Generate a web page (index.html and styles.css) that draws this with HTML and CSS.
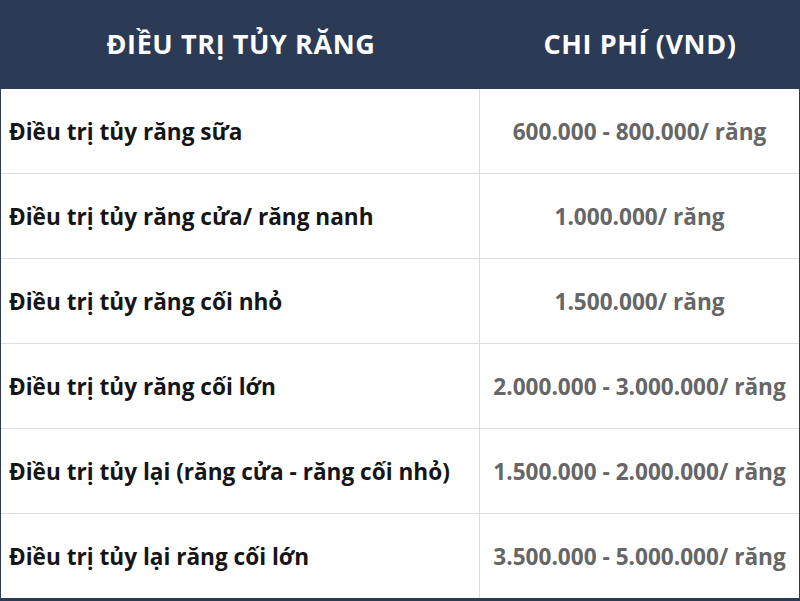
FILE: index.html
```html
<!DOCTYPE html>
<html lang="vi">
<head>
<meta charset="utf-8">
<link rel="stylesheet" href="styles.css">
</head>
<body>
<div class="table">
  <div class="head">
    <div class="hcell">ĐIỀU TRỊ TỦY RĂNG</div>
    <div class="hcell">CHI PHÍ (VND)</div>
  </div>
  <div class="row"><div class="name">Điều trị tủy răng sữa</div><div class="price">600.000 - 800.000/ răng</div></div>
  <div class="row"><div class="name">Điều trị tủy răng cửa/ răng nanh</div><div class="price">1.000.000/ răng</div></div>
  <div class="row"><div class="name">Điều trị tủy răng cối nhỏ</div><div class="price">1.500.000/ răng</div></div>
  <div class="row"><div class="name">Điều trị tủy răng cối lớn</div><div class="price">2.000.000 - 3.000.000/ răng</div></div>
  <div class="row"><div class="name">Điều trị tủy lại (răng cửa - răng cối nhỏ)</div><div class="price">1.500.000 - 2.000.000/ răng</div></div>
  <div class="row last"><div class="name">Điều trị tủy lại răng cối lớn</div><div class="price">3.500.000 - 5.000.000/ răng</div></div>
</div>
</body>
</html>
```
FILE: styles.css
```css
html, body {
  margin: 0;
  padding: 0;
  background: #2b3a55;
}
.table {
  width: 800px;
  height: 601px;
  box-sizing: border-box;
  border-left: 1px solid #2b3a55;
  border-right: 1px solid #2b3a55;
  border-bottom: 3px solid #2b3a55;
  background: #fff;
  display: flex;
  flex-direction: column;
  font-family: "Open Sans", "Noto Sans", sans-serif;
}
.head {
  height: 89px;
  flex: none;
  background: #2b3a55;
  display: grid;
  grid-template-columns: 480px 1fr;
  color: #fff;
}
.hcell {
  display: flex;
  align-items: center;
  justify-content: center;
  font-weight: 700;
  font-size: 27px;
  letter-spacing: 0.6px;
  padding-bottom: 2px;
}
.row {
  flex: 1;
  display: grid;
  grid-template-columns: 479px 1fr;
  border-bottom: 1px solid #dedede;
}
.row.last {
  border-bottom: none;
}
.name {
  display: flex;
  align-items: center;
  padding-left: 8px;
  font-weight: 700;
  font-size: 22.6px;
  color: #151515;
  border-right: 1px solid #dedede;
}
.price {
  display: flex;
  align-items: center;
  justify-content: center;
  font-weight: 700;
  font-size: 22.6px;
  color: #666;
}
```
